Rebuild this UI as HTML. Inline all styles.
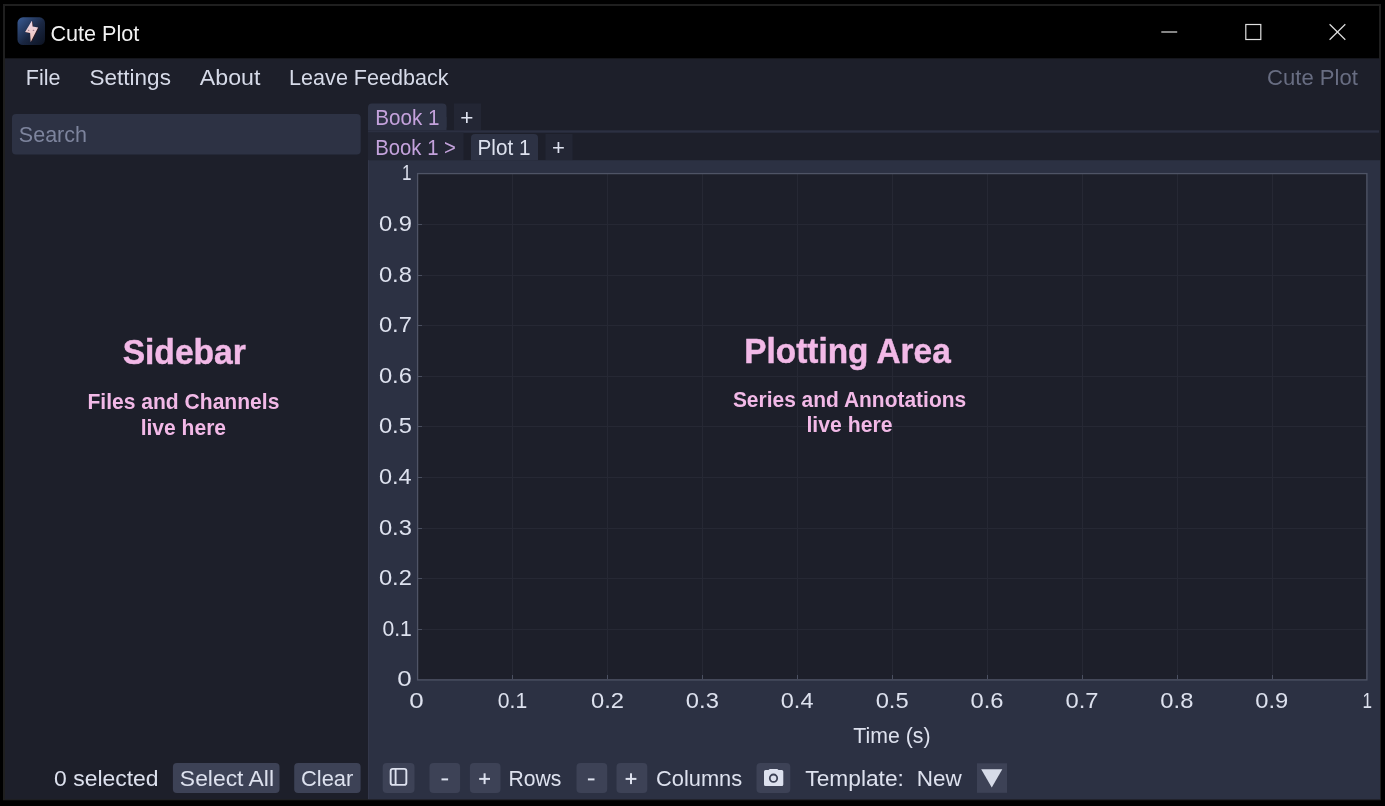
<!DOCTYPE html><html><head><meta charset="utf-8"><style>html,body{margin:0;padding:0;background:#000;width:1385px;height:806px;overflow:hidden}svg{display:block;will-change:transform}text{font-family:"Liberation Sans",sans-serif;white-space:pre}</style></head><body>
<svg width="1385" height="806" viewBox="0 0 1385 806">
<rect x="0" y="0" width="1385" height="806" fill="#000" />
<rect x="3" y="4" width="1378" height="796.3" fill="#1f1f1f" />
<rect x="5" y="6" width="1374" height="52.5" fill="#000000" />
<rect x="5" y="58.5" width="1375" height="740.8" fill="#1d1f2a" />
<defs><linearGradient id="ig" x1="0" y1="0" x2="1" y2="1"><stop offset="0" stop-color="#3a5c96"/><stop offset="0.55" stop-color="#1a2742"/><stop offset="1" stop-color="#0c1220"/></linearGradient><linearGradient id="bg2" x1="0" y1="0" x2="0" y2="1"><stop offset="0" stop-color="#ead6e8"/><stop offset="1" stop-color="#f2c4b8"/></linearGradient></defs>
<rect x="17.5" y="17.3" width="27.5" height="27.7" fill="url(#ig)" rx="5.5" />
<polygon points="32.5,21.6 26.0,32.6 31.0,33.7 31.6,42.6 38.9,28.1 33.4,27.3 32.8,21.6" fill="#3a1a1a" opacity="0.7"/>
<polygon points="31.7,20.9 25.1,31.9 30.1,33.0 30.7,41.9 38.1,27.4 32.6,26.6 32.0,20.9" fill="url(#bg2)"/>
<ellipse cx="28.6" cy="30.3" rx="0.8" ry="0.5" fill="#8a6a78"/><ellipse cx="33.5" cy="30.2" rx="0.8" ry="0.5" fill="#8a6a78"/>
<line x1="1161.3" y1="32" x2="1177.2" y2="32" stroke="#e0e0e0" stroke-width="1.2" />
<rect x="1245.8" y="24.5" width="15" height="15" fill="none" stroke="#e0e0e0" stroke-width="1.2"/>
<line x1="1329.6" y1="24.2" x2="1345.3" y2="39.8" stroke="#e0e0e0" stroke-width="1.2" />
<line x1="1345.3" y1="24.2" x2="1329.6" y2="39.8" stroke="#e0e0e0" stroke-width="1.2" />
<rect x="12" y="114" width="348.7" height="40.4" fill="#2d3244" rx="4" />
<rect x="368" y="103.5" width="78.5" height="26.8" fill="#2d3244" rx="4" />
<rect x="368" y="117" width="78.5" height="13.3" fill="#2d3244" />
<rect x="454" y="103.5" width="27" height="26.8" fill="#232634" />
<rect x="368" y="130.3" width="1011" height="2.4" fill="#2c3042" />
<rect x="368" y="132.7" width="95.5" height="27.5" fill="#232634" />
<rect x="471" y="134" width="67" height="26.2" fill="#2d3244" rx="4" />
<rect x="471" y="147" width="67" height="13.2" fill="#2d3244" />
<rect x="545.5" y="134" width="27" height="26.2" fill="#232634" />
<rect x="368" y="160.2" width="1012" height="639.1" fill="#2c3143" />
<line x1="368.5" y1="160.2" x2="368.5" y2="799" stroke="#33374a" stroke-width="1" />
<rect x="417.5" y="173.5" width="949" height="506" fill="#1d1f2a" />
<line x1="512.5" y1="174" x2="512.5" y2="679" stroke="#262834" stroke-width="1" />
<line x1="418" y1="629.5" x2="1366" y2="629.5" stroke="#262834" stroke-width="1" />
<line x1="418" y1="629.5" x2="422" y2="629.5" stroke="#4a4f60" stroke-width="1" />
<line x1="512.5" y1="679" x2="512.5" y2="675" stroke="#4a4f60" stroke-width="1" />
<line x1="607.5" y1="174" x2="607.5" y2="679" stroke="#262834" stroke-width="1" />
<line x1="418" y1="578.5" x2="1366" y2="578.5" stroke="#262834" stroke-width="1" />
<line x1="418" y1="578.5" x2="422" y2="578.5" stroke="#4a4f60" stroke-width="1" />
<line x1="607.5" y1="679" x2="607.5" y2="675" stroke="#4a4f60" stroke-width="1" />
<line x1="702.5" y1="174" x2="702.5" y2="679" stroke="#262834" stroke-width="1" />
<line x1="418" y1="528.5" x2="1366" y2="528.5" stroke="#262834" stroke-width="1" />
<line x1="418" y1="528.5" x2="422" y2="528.5" stroke="#4a4f60" stroke-width="1" />
<line x1="702.5" y1="679" x2="702.5" y2="675" stroke="#4a4f60" stroke-width="1" />
<line x1="797.5" y1="174" x2="797.5" y2="679" stroke="#262834" stroke-width="1" />
<line x1="418" y1="477.5" x2="1366" y2="477.5" stroke="#262834" stroke-width="1" />
<line x1="418" y1="477.5" x2="422" y2="477.5" stroke="#4a4f60" stroke-width="1" />
<line x1="797.5" y1="679" x2="797.5" y2="675" stroke="#4a4f60" stroke-width="1" />
<line x1="892.5" y1="174" x2="892.5" y2="679" stroke="#262834" stroke-width="1" />
<line x1="418" y1="426.5" x2="1366" y2="426.5" stroke="#262834" stroke-width="1" />
<line x1="418" y1="426.5" x2="422" y2="426.5" stroke="#4a4f60" stroke-width="1" />
<line x1="892.5" y1="679" x2="892.5" y2="675" stroke="#4a4f60" stroke-width="1" />
<line x1="987.5" y1="174" x2="987.5" y2="679" stroke="#262834" stroke-width="1" />
<line x1="418" y1="376.5" x2="1366" y2="376.5" stroke="#262834" stroke-width="1" />
<line x1="418" y1="376.5" x2="422" y2="376.5" stroke="#4a4f60" stroke-width="1" />
<line x1="987.5" y1="679" x2="987.5" y2="675" stroke="#4a4f60" stroke-width="1" />
<line x1="1082.5" y1="174" x2="1082.5" y2="679" stroke="#262834" stroke-width="1" />
<line x1="418" y1="325.5" x2="1366" y2="325.5" stroke="#262834" stroke-width="1" />
<line x1="418" y1="325.5" x2="422" y2="325.5" stroke="#4a4f60" stroke-width="1" />
<line x1="1082.5" y1="679" x2="1082.5" y2="675" stroke="#4a4f60" stroke-width="1" />
<line x1="1177.5" y1="174" x2="1177.5" y2="679" stroke="#262834" stroke-width="1" />
<line x1="418" y1="275.5" x2="1366" y2="275.5" stroke="#262834" stroke-width="1" />
<line x1="418" y1="275.5" x2="422" y2="275.5" stroke="#4a4f60" stroke-width="1" />
<line x1="1177.5" y1="679" x2="1177.5" y2="675" stroke="#4a4f60" stroke-width="1" />
<line x1="1272.5" y1="174" x2="1272.5" y2="679" stroke="#262834" stroke-width="1" />
<line x1="418" y1="224.5" x2="1366" y2="224.5" stroke="#262834" stroke-width="1" />
<line x1="418" y1="224.5" x2="422" y2="224.5" stroke="#4a4f60" stroke-width="1" />
<line x1="1272.5" y1="679" x2="1272.5" y2="675" stroke="#4a4f60" stroke-width="1" />
<rect x="417.6" y="173.6" width="949.3" height="506.3" fill="none" stroke="#4f5466" stroke-width="1.3"/>
<rect x="172.9" y="763.0" width="106.6" height="29.9" fill="#3d4256" rx="4" />
<rect x="294.2" y="763.0" width="66.4" height="29.9" fill="#3d4256" rx="4" />
<rect x="382.7" y="763.0" width="31.8" height="29.9" fill="#3d4256" rx="4" />
<rect x="429.5" y="763.0" width="30.6" height="29.9" fill="#3d4256" rx="4" />
<rect x="469.9" y="763.0" width="30.6" height="29.9" fill="#3d4256" rx="4" />
<rect x="576.5" y="763.0" width="30.7" height="29.9" fill="#3d4256" rx="4" />
<rect x="616.5" y="763.0" width="30.8" height="29.9" fill="#3d4256" rx="4" />
<rect x="756.5" y="763.0" width="33.8" height="29.9" fill="#3d4256" rx="4" />
<rect x="977" y="763.3" width="30" height="29.5" fill="#3d4256" />
<rect x="390.65" y="768.85" width="15.7" height="16.0" rx="2.2" fill="none" stroke="#dde1ee" stroke-width="1.9"/>
<line x1="395.6" y1="769" x2="395.6" y2="785" stroke="#dde1ee" stroke-width="1.9" />
<rect x="441.5" y="778.4" width="6.6" height="2.0" fill="#dde1ee" />
<rect x="587.9000000000001" y="778.4" width="6.6" height="2.0" fill="#dde1ee" />
<rect x="479.20000000000005" y="777.9" width="10.8" height="2.0" fill="#dde1ee" />
<rect x="483.6" y="773.3" width="2.0" height="10.8" fill="#dde1ee" />
<rect x="625.6" y="777.9" width="10.8" height="2.0" fill="#dde1ee" />
<rect x="630.0" y="773.3" width="2.0" height="10.8" fill="#dde1ee" />
<path d="M764,771.6 q0,-1.5 1.5,-1.5 h3 l1.2,-1.2 h7.6 l1.2,1.2 h3.3 q1.5,0 1.5,1.5 v12.9 q0,1.5 -1.5,1.5 h-16.3 q-1.5,0 -1.5,-1.5 z" fill="#dde1ee"/>
<circle cx="773.5" cy="778.2" r="3.7" fill="none" stroke="#3d4256" stroke-width="1.8"/>
<polygon points="981.2,769.2 1002.3,769.2 991.75,787.6" fill="#d6dbe8"/>
<text x="50.40" y="41.00" font-size="22.5" font-weight="normal" fill="#f2f2f2" textLength="88.96" lengthAdjust="spacingAndGlyphs">Cute Plot</text>
<text x="25.72" y="85.00" font-size="22.5" font-weight="normal" fill="#d6dae8" textLength="34.75" lengthAdjust="spacingAndGlyphs">File</text>
<text x="89.50" y="85.00" font-size="22.5" font-weight="normal" fill="#d6dae8" textLength="81.41" lengthAdjust="spacingAndGlyphs">Settings</text>
<text x="199.80" y="85.00" font-size="22.5" font-weight="normal" fill="#d6dae8" textLength="60.56" lengthAdjust="spacingAndGlyphs">About</text>
<text x="289.12" y="85.00" font-size="22.5" font-weight="normal" fill="#d6dae8" textLength="159.50" lengthAdjust="spacingAndGlyphs">Leave Feedback</text>
<text x="1267.07" y="85.00" font-size="22.5" font-weight="normal" fill="#686d82" textLength="90.79" lengthAdjust="spacingAndGlyphs">Cute Plot</text>
<text x="18.84" y="142.00" font-size="22.5" font-weight="normal" fill="#7d849d" textLength="68.13" lengthAdjust="spacingAndGlyphs">Search</text>
<text x="375.29" y="125.00" font-size="22.5" font-weight="normal" fill="#c4a2dc" textLength="64.28" lengthAdjust="spacingAndGlyphs">Book 1</text>
<text x="460.20" y="125.00" font-size="22.5" font-weight="normal" fill="#dde1ee" textLength="13.14" lengthAdjust="spacingAndGlyphs">+</text>
<text x="375.32" y="155.00" font-size="22.5" font-weight="normal" fill="#c4a2dc" textLength="80.56" lengthAdjust="spacingAndGlyphs">Book 1 &gt;</text>
<text x="477.59" y="155.00" font-size="22.5" font-weight="normal" fill="#dde1ee" textLength="52.87" lengthAdjust="spacingAndGlyphs">Plot 1</text>
<text x="552.02" y="155.00" font-size="22.5" font-weight="normal" fill="#dde1ee" textLength="12.90" lengthAdjust="spacingAndGlyphs">+</text>
<text x="54.14" y="786.00" font-size="22.5" font-weight="normal" fill="#dde1ee" textLength="104.47" lengthAdjust="spacingAndGlyphs">0 selected</text>
<text x="179.88" y="786.00" font-size="22.5" font-weight="normal" fill="#dde1ee" textLength="94.11" lengthAdjust="spacingAndGlyphs">Select All</text>
<text x="300.98" y="786.00" font-size="22.5" font-weight="normal" fill="#dde1ee" textLength="52.29" lengthAdjust="spacingAndGlyphs">Clear</text>
<text x="508.56" y="786.00" font-size="22.5" font-weight="normal" fill="#dde1ee" textLength="52.86" lengthAdjust="spacingAndGlyphs">Rows</text>
<text x="656.09" y="786.00" font-size="22.5" font-weight="normal" fill="#dde1ee" textLength="86.07" lengthAdjust="spacingAndGlyphs">Columns</text>
<text x="805.29" y="786.00" font-size="22.5" font-weight="normal" fill="#dde1ee" textLength="98.59" lengthAdjust="spacingAndGlyphs">Template:</text>
<text x="916.85" y="786.00" font-size="22.5" font-weight="normal" fill="#dde1ee" textLength="44.96" lengthAdjust="spacingAndGlyphs">New</text>
<text x="853.33" y="743.00" font-size="22.5" font-weight="normal" fill="#dde1ee" textLength="77.20" lengthAdjust="spacingAndGlyphs">Time (s)</text>
<text x="122.63" y="363.70" font-size="34.5" font-weight="bold" fill="#f2b9e7" stroke="#f2b9e7" stroke-width="0.45" textLength="123.21" lengthAdjust="spacingAndGlyphs">Sidebar</text>
<text x="87.46" y="409.40" font-size="22" font-weight="bold" fill="#f2b9e7" textLength="191.89" lengthAdjust="spacingAndGlyphs">Files and Channels</text>
<text x="140.67" y="434.90" font-size="22" font-weight="bold" fill="#f2b9e7" textLength="85.38" lengthAdjust="spacingAndGlyphs">live here</text>
<text x="744.32" y="363.30" font-size="34.5" font-weight="bold" fill="#f2b9e7" stroke="#f2b9e7" stroke-width="0.45" textLength="206.39" lengthAdjust="spacingAndGlyphs">Plotting Area</text>
<text x="732.89" y="406.60" font-size="22" font-weight="bold" fill="#f2b9e7" textLength="233.26" lengthAdjust="spacingAndGlyphs">Series and Annotations</text>
<text x="806.46" y="432.00" font-size="22" font-weight="bold" fill="#f2b9e7" textLength="86.00" lengthAdjust="spacingAndGlyphs">live here</text>
<text x="397.23" y="686.00" font-size="22.5" font-weight="normal" fill="#dde1ee" textLength="14.45" lengthAdjust="spacingAndGlyphs">0</text>
<text x="409.38" y="708.00" font-size="22.5" font-weight="normal" fill="#dde1ee" textLength="14.45" lengthAdjust="spacingAndGlyphs">0</text>
<text x="382.40" y="636.00" font-size="22.5" font-weight="normal" fill="#dde1ee" textLength="29.37" lengthAdjust="spacingAndGlyphs">0.1</text>
<text x="497.85" y="708.00" font-size="22.5" font-weight="normal" fill="#dde1ee" textLength="29.37" lengthAdjust="spacingAndGlyphs">0.1</text>
<text x="378.91" y="585.00" font-size="22.5" font-weight="normal" fill="#dde1ee" textLength="32.98" lengthAdjust="spacingAndGlyphs">0.2</text>
<text x="590.96" y="708.00" font-size="22.5" font-weight="normal" fill="#dde1ee" textLength="32.98" lengthAdjust="spacingAndGlyphs">0.2</text>
<text x="378.91" y="535.00" font-size="22.5" font-weight="normal" fill="#dde1ee" textLength="32.98" lengthAdjust="spacingAndGlyphs">0.3</text>
<text x="685.86" y="708.00" font-size="22.5" font-weight="normal" fill="#dde1ee" textLength="32.98" lengthAdjust="spacingAndGlyphs">0.3</text>
<text x="378.92" y="484.00" font-size="22.5" font-weight="normal" fill="#dde1ee" textLength="32.70" lengthAdjust="spacingAndGlyphs">0.4</text>
<text x="780.77" y="708.00" font-size="22.5" font-weight="normal" fill="#dde1ee" textLength="32.70" lengthAdjust="spacingAndGlyphs">0.4</text>
<text x="378.91" y="433.00" font-size="22.5" font-weight="normal" fill="#dde1ee" textLength="32.98" lengthAdjust="spacingAndGlyphs">0.5</text>
<text x="875.66" y="708.00" font-size="22.5" font-weight="normal" fill="#dde1ee" textLength="32.98" lengthAdjust="spacingAndGlyphs">0.5</text>
<text x="378.91" y="383.00" font-size="22.5" font-weight="normal" fill="#dde1ee" textLength="32.98" lengthAdjust="spacingAndGlyphs">0.6</text>
<text x="970.56" y="708.00" font-size="22.5" font-weight="normal" fill="#dde1ee" textLength="32.98" lengthAdjust="spacingAndGlyphs">0.6</text>
<text x="378.91" y="332.00" font-size="22.5" font-weight="normal" fill="#dde1ee" textLength="32.98" lengthAdjust="spacingAndGlyphs">0.7</text>
<text x="1065.46" y="708.00" font-size="22.5" font-weight="normal" fill="#dde1ee" textLength="32.98" lengthAdjust="spacingAndGlyphs">0.7</text>
<text x="378.91" y="282.00" font-size="22.5" font-weight="normal" fill="#dde1ee" textLength="32.98" lengthAdjust="spacingAndGlyphs">0.8</text>
<text x="1160.36" y="708.00" font-size="22.5" font-weight="normal" fill="#dde1ee" textLength="32.98" lengthAdjust="spacingAndGlyphs">0.8</text>
<text x="378.91" y="231.00" font-size="22.5" font-weight="normal" fill="#dde1ee" textLength="32.98" lengthAdjust="spacingAndGlyphs">0.9</text>
<text x="1255.26" y="708.00" font-size="22.5" font-weight="normal" fill="#dde1ee" textLength="32.98" lengthAdjust="spacingAndGlyphs">0.9</text>
<text x="402.07" y="180.00" font-size="22.5" font-weight="normal" fill="#dde1ee" textLength="9.50" lengthAdjust="spacingAndGlyphs">1</text>
<text x="1362.47" y="708.00" font-size="22.5" font-weight="normal" fill="#dde1ee" textLength="9.50" lengthAdjust="spacingAndGlyphs">1</text>
</svg></body></html>
